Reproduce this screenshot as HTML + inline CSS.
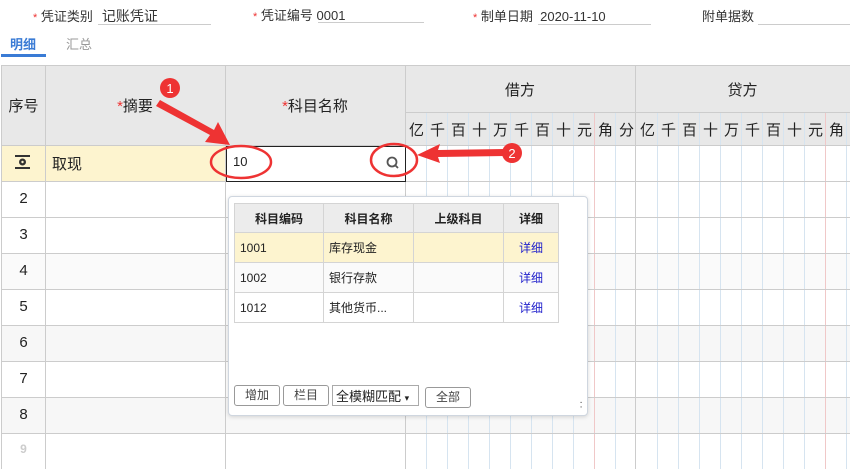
<!DOCTYPE html>
<html><head><meta charset="utf-8"><style>
body{margin:0;width:850px;height:469px;overflow:hidden;background:#fff;font-family:"Liberation Sans","Noto Sans CJK SC",sans-serif;position:relative;color:#222}
.a{position:absolute}
.lbl{font-size:13px;color:#333}
.req{color:#e33;font-size:11px}
.ul{border-bottom:1px solid #ccc}
.hdr{background:#e8e8e8}
.t{font-size:15px}
td{box-sizing:border-box;overflow:hidden;white-space:nowrap}
</style></head><body>
<div class="a lbl" style="left:33px;top:6px"><span class="req">*</span> 凭证类别</div>
<div class="a ul lbl" style="left:98px;top:6px;width:113px;height:18px;font-size:14px">&nbsp;记账凭证</div>
<div class="a lbl" style="left:253px;top:5px"><span class="req">*</span> 凭证编号 <span style="font-size:13px">0001</span></div>
<div class="a ul" style="left:318px;top:22px;width:106px"></div>
<div class="a lbl" style="left:473px;top:6px"><span class="req">*</span> 制单日期 &nbsp;2020-11-10</div>
<div class="a ul" style="left:538px;top:24px;width:113px"></div>
<div class="a lbl" style="left:702px;top:6px">附单据数</div>
<div class="a ul" style="left:758px;top:24px;width:92px"></div>
<div class="a" style="left:10px;top:34px;font-size:13px;color:#3a7bd5;font-weight:bold">明细</div>
<div class="a" style="left:66px;top:34px;font-size:13px;color:#999">汇总</div>
<div class="a" style="left:1px;top:54px;width:45px;height:3px;background:#3a7bd5"></div>

<div class="a hdr" style="left:1px;top:65px;width:849px;height:80px;border-top:1px solid #ccc"></div>
<div class="a" style="left:2px;top:146px;width:403px;height:35px;background:#fdf4cf"></div>
<div class="a" style="left:2px;top:254px;width:848px;height:35px;background:#fafafa"></div>
<div class="a" style="left:2px;top:326px;width:848px;height:35px;background:#f7f7f7"></div>
<div class="a" style="left:2px;top:398px;width:848px;height:35px;background:#f7f7f7"></div>
<svg class="a" style="left:0;top:0" width="850" height="469" id="g"></svg>
<script>
var s='';for(var i=0;i<21;i++){var x=426+i*21+.5;if(x>635&&x<637)continue;var c=(i==8||i==19)?'#f0c8c8':'#d6e4f0';s+='<line x1="'+x+'" y1="113" x2="'+x+'" y2="469" stroke="'+c+'"/>';}
var l='<line x1="405" y1="112.5" x2="850" y2="112.5" stroke="#ccc"/>';for(var y=146;y<469;y+=36){l+='<line x1="1" y1="'+(y-0.5)+'" x2="850" y2="'+(y-0.5)+'" stroke="#ccc"/>';}
['1.5','45.5','225.5','405.5','635.5'].forEach(function(x){l+='<line x1="'+x+'" y1="66" x2="'+x+'" y2="469" stroke="#ccc"/>'});
document.getElementById('g').innerHTML=s+l;
var d='';var ch='亿千百十万千百十元角分亿千百十万千百十元角分';for(var i=0;i<22;i++){d+='<div class="a t" style="left:'+(406+i*21)+'px;top:119px;width:21px;text-align:center">'+ch[i]+'</div>';}
document.write(d);
</script>
<div class="a t" style="left:2px;top:95px;width:43px;text-align:center">序号</div>
<div class="a t" style="left:45px;top:95px;width:180px;text-align:center"><span style="color:#e33">*</span>摘要</div>
<div class="a t" style="left:225px;top:95px;width:180px;text-align:center"><span style="color:#e33">*</span>科目名称</div>
<div class="a t" style="left:405px;top:79px;width:230px;text-align:center">借方</div>
<div class="a t" style="left:635px;top:79px;width:215px;text-align:center">贷方</div>
<div class="a t" style="left:52px;top:153px">取现</div>
<svg class="a" style="left:15px;top:155px" width="16" height="14"><rect x="0" y="0" width="15" height="2" fill="#333"/><rect x="0" y="12" width="15" height="2" fill="#333"/><circle cx="7.5" cy="7" r="3.5" fill="#333"/><circle cx="7.5" cy="7" r="1.2" fill="#fdf4cf"/></svg>
<div class="a" style="left:2px;top:190px;width:43px;text-align:center;font-size:15px">2</div>
<div class="a" style="left:2px;top:226px;width:43px;text-align:center;font-size:15px">3</div>
<div class="a" style="left:2px;top:262px;width:43px;text-align:center;font-size:15px">4</div>
<div class="a" style="left:2px;top:298px;width:43px;text-align:center;font-size:15px">5</div>
<div class="a" style="left:2px;top:334px;width:43px;text-align:center;font-size:15px">6</div>
<div class="a" style="left:2px;top:370px;width:43px;text-align:center;font-size:15px">7</div>
<div class="a" style="left:2px;top:406px;width:43px;text-align:center;font-size:15px">8</div>
<div class="a" style="left:2px;top:442px;width:43px;text-align:center;font-size:12px;color:#ccc;font-weight:bold">9</div>
<div class="a" style="left:226px;top:146px;width:178px;height:34px;border:1px solid #222;background:#fff"></div>
<div class="a" style="left:233px;top:154px;font-size:13px">10</div>
<svg class="a" style="left:385px;top:155px" width="16" height="16"><circle cx="7" cy="7" r="4.5" fill="none" stroke="#555" stroke-width="1.8"/><line x1="10" y1="10" x2="13" y2="13" stroke="#555" stroke-width="1.8"/></svg>
<div class="a" style="left:228px;top:196px;width:358px;height:218px;background:#fff;border:1px solid #cfd6df;border-radius:4px;box-shadow:0 1px 4px rgba(0,0,0,.15)"></div>
<table class="a" style="left:234px;top:203px;border-collapse:collapse;font-size:12px;table-layout:fixed;width:324px">
<colgroup><col style="width:89px"><col style="width:90px"><col style="width:90px"><col style="width:55px"></colgroup>
<tr style="background:#ececec;height:29px;font-weight:bold"><td style="text-align:center;border:1px solid #d4d4d4">科目编码</td><td style="text-align:center;border:1px solid #d4d4d4">科目名称</td><td style="text-align:center;border:1px solid #d4d4d4">上级科目</td><td style="text-align:center;border:1px solid #d4d4d4">详细</td></tr>
<tr style="background:#fdf4cf;height:30px"><td style="border:1px solid #d4d4d4;padding-left:5px">1001</td><td style="border:1px solid #d4d4d4;padding-left:5px">库存现金</td><td style="border:1px solid #d4d4d4"></td><td style="border:1px solid #d4d4d4;text-align:center;color:#22c">详细</td></tr>
<tr style="background:#fafafa;height:30px"><td style="border:1px solid #d4d4d4;padding-left:5px">1002</td><td style="border:1px solid #d4d4d4;padding-left:5px">银行存款</td><td style="border:1px solid #d4d4d4"></td><td style="border:1px solid #d4d4d4;text-align:center;color:#22c">详细</td></tr>
<tr style="height:30px"><td style="border:1px solid #d4d4d4;padding-left:5px">1012</td><td style="border:1px solid #d4d4d4;padding-left:5px">其他货币...</td><td style="border:1px solid #d4d4d4"></td><td style="border:1px solid #d4d4d4;text-align:center;color:#22c">详细</td></tr>
</table>
<div class="a" style="left:234px;top:385px;width:44px;height:19px;border:1px solid #999;border-radius:3px;font-size:12px;text-align:center;line-height:19px;color:#444">增加</div>
<div class="a" style="left:283px;top:385px;width:44px;height:19px;border:1px solid #999;border-radius:3px;font-size:12px;text-align:center;line-height:19px;color:#444">栏目</div>
<div class="a" style="left:332px;top:385px;width:87px;height:21px;border:1px solid #aaa;font-size:13px;line-height:21px;padding-left:3px;box-sizing:border-box">全模糊匹配 <span style="font-size:9px">▾</span></div>
<div class="a" style="left:425px;top:387px;width:44px;height:19px;border:1px solid #999;border-radius:3px;font-size:12px;text-align:center;line-height:19px;color:#444">全部</div>
<div class="a" style="left:577px;top:401px;font-size:8px;color:#666">⠨</div>
<svg class="a" style="left:0;top:0" width="850" height="469">
<ellipse cx="241" cy="162" rx="30" ry="16" fill="none" stroke="#e33" stroke-width="2.5"/>
<ellipse cx="394" cy="160" rx="23" ry="16" fill="none" stroke="#e33" stroke-width="2.5"/>
<polygon points="160,100 214,130 218,122 230,145 205,142 210,135 156,106" fill="#e33"/>
<circle cx="170" cy="88" r="10" fill="#e33"/>
<text x="170" y="93" fill="#fff" font-size="13" text-anchor="middle" font-family="Liberation Sans">1</text>
<polygon points="417,155 440,144 438,150 505,149 505,156 438,157 440,163" fill="#e33"/>
<circle cx="512" cy="153" r="10" fill="#e33"/>
<text x="512" y="158" fill="#fff" font-size="13" text-anchor="middle" font-family="Liberation Sans">2</text>
</svg>
</body></html>
